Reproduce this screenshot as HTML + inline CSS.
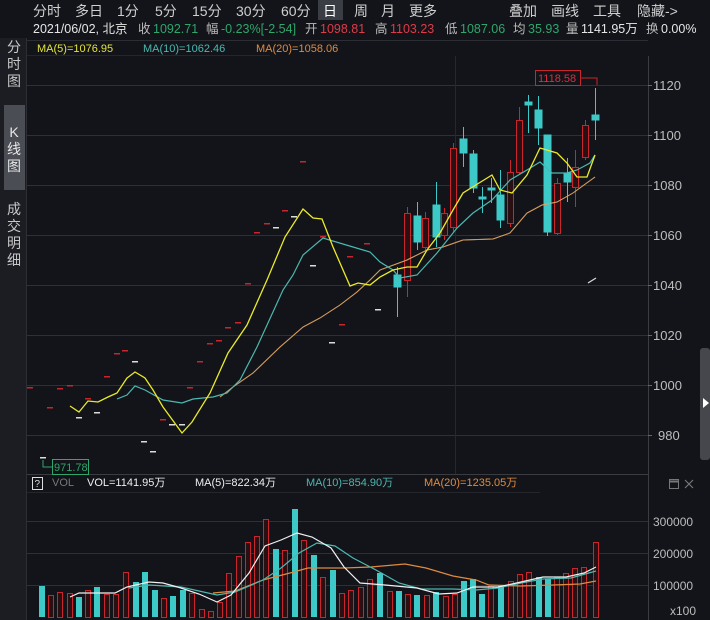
<!DOCTYPE html>
<html><head><meta charset="utf-8"><style>
html,body{margin:0;padding:0;background:#121419;}
svg{display:block;font-family:"Liberation Sans","Noto Sans CJK SC",sans-serif;}
</style></head><body>
<svg width="710" height="620" viewBox="0 0 710 620" xmlns="http://www.w3.org/2000/svg">
<rect width="710" height="620" fill="#121419"/>
<!-- sidebar -->
<rect x="0" y="38" width="26" height="582" fill="#1b1d23"/>
<rect x="4" y="105" width="21" height="85" fill="#4a4d54"/>
<line x1="26.5" y1="38" x2="26.5" y2="620" stroke="#2c2e34"/>
<g fill="#c8c8c8" font-size="14" text-anchor="middle">
<text x="14" y="52">分</text><text x="14" y="69">时</text><text x="14" y="86">图</text>
<text x="14" y="137" fill="#e8e8e8">K</text><text x="14" y="154" fill="#e8e8e8">线</text><text x="14" y="171" fill="#e8e8e8">图</text>
<text x="14" y="214">成</text><text x="14" y="231">交</text><text x="14" y="248">明</text><text x="14" y="265">细</text>
</g>
<!-- top bar -->
<rect x="318" y="0" width="25" height="20" fill="#3a3d44"/>
<g fill="#cfcfcf" font-size="14">
<text x="33" y="16">分时</text><text x="75" y="16">多日</text><text x="117" y="16">1分</text><text x="155" y="16">5分</text><text x="192" y="16">15分</text><text x="236" y="16">30分</text><text x="281" y="16">60分</text>
<text x="323" y="16" fill="#fff">日</text><text x="354" y="16">周</text><text x="381" y="16">月</text><text x="409" y="16">更多</text>
<text x="509" y="16">叠加</text><text x="551" y="16">画线</text><text x="593" y="16">工具</text><text x="637" y="16">隐藏-&gt;</text>
</g>
<g font-size="12.5">
<text x="33" y="33" fill="#e6e6e6">2021/06/02, 北京</text>
<text x="138" y="33" fill="#bbb">收</text><text x="153" y="33" fill="#2fa66a">1092.71</text>
<text x="206" y="33" fill="#bbb">幅</text><text x="221" y="33" fill="#2fa66a">-0.23%[-2.54]</text>
<text x="305" y="33" fill="#bbb">开</text><text x="320" y="33" fill="#e03a48">1098.81</text>
<text x="375" y="33" fill="#bbb">高</text><text x="390" y="33" fill="#e03a48">1103.23</text>
<text x="445" y="33" fill="#bbb">低</text><text x="460" y="33" fill="#2fa66a">1087.06</text>
<text x="513" y="33" fill="#bbb">均</text><text x="528" y="33" fill="#2fa66a">35.93</text>
<text x="566" y="33" fill="#bbb">量</text><text x="581" y="33" fill="#e6e6e6">1141.95万</text>
<text x="646" y="33" fill="#bbb">换</text><text x="661" y="33" fill="#e6e6e6">0.00%</text>
</g>
<!-- chart frame -->
<line x1="27" y1="40.5" x2="648" y2="40.5" stroke="#2c2e34"/>
<line x1="27" y1="55.5" x2="270" y2="55.5" stroke="#24262c"/>
<g font-size="11">
<text x="37" y="52" fill="#e4e43a">MA(5)=1076.95</text>
<text x="143" y="52" fill="#4cb8b0">MA(10)=1062.46</text>
<text x="256" y="52" fill="#e08a40">MA(20)=1058.06</text>
</g>
<g stroke="#2e3036" stroke-width="1">
<line x1="27" y1="85.5" x2="648" y2="85.5"/><line x1="27" y1="135.5" x2="648" y2="135.5"/>
<line x1="27" y1="185.5" x2="648" y2="185.5"/><line x1="27" y1="235.5" x2="648" y2="235.5"/>
<line x1="27" y1="285.5" x2="648" y2="285.5"/><line x1="27" y1="335.5" x2="648" y2="335.5"/>
<line x1="27" y1="385.5" x2="648" y2="385.5"/><line x1="27" y1="435.5" x2="648" y2="435.5"/>
<line x1="455.5" y1="56" x2="455.5" y2="474" stroke="#26282e"/>
<line x1="27" y1="474.5" x2="648" y2="474.5" stroke="#3a3c42"/>
<line x1="27" y1="521.5" x2="648" y2="521.5"/><line x1="27" y1="553.5" x2="648" y2="553.5"/><line x1="27" y1="585.5" x2="648" y2="585.5"/>
</g>
<line x1="648.5" y1="56" x2="648.5" y2="620" stroke="#3a3c42"/>
<g stroke="#666" stroke-width="1">
<line x1="648" y1="85.5" x2="652" y2="85.5"/><line x1="648" y1="135.5" x2="652" y2="135.5"/><line x1="648" y1="185.5" x2="652" y2="185.5"/><line x1="648" y1="235.5" x2="652" y2="235.5"/><line x1="648" y1="285.5" x2="652" y2="285.5"/><line x1="648" y1="335.5" x2="652" y2="335.5"/><line x1="648" y1="385.5" x2="652" y2="385.5"/><line x1="648" y1="435.5" x2="652" y2="435.5"/>
</g>
<g fill="#bdbdbd" font-size="13">
<text x="653" y="90">1120</text><text x="653" y="140">1100</text><text x="653" y="190">1080</text><text x="653" y="240">1060</text><text x="653" y="290">1040</text><text x="653" y="340">1020</text><text x="653" y="390">1000</text><text x="658" y="440">980</text>
</g>
<g fill="#bdbdbd" font-size="12">
<text x="653" y="526">300000</text><text x="653" y="558">200000</text><text x="653" y="590">100000</text><text x="670" y="615">x100</text>
</g>
<!-- scrollbar -->
<rect x="700" y="348" width="10" height="112" rx="3" fill="#45474d"/>
<polygon points="703,398 709,403 703,408" fill="#fff"/>
<!-- small-dash candles left -->
<g fill="#c8262c">
<rect x="27" y="387" width="6" height="1.5"/><rect x="47" y="407" width="6" height="1.5"/><rect x="57" y="388" width="6" height="1.5"/><rect x="67" y="385" width="6" height="1.5"/><rect x="85" y="398" width="6" height="1.5"/><rect x="104" y="376" width="6" height="1.5"/><rect x="114" y="353" width="6" height="1.5"/><rect x="122" y="350" width="6" height="1.5"/><rect x="160" y="419" width="6" height="1.5"/><rect x="187" y="387" width="6" height="1.5"/><rect x="197" y="361" width="6" height="1.5"/><rect x="207" y="343" width="6" height="1.5"/><rect x="216" y="340" width="6" height="1.5"/><rect x="225" y="327" width="6" height="1.5"/><rect x="235" y="322" width="6" height="1.5"/><rect x="245" y="283" width="6" height="1.5"/><rect x="254" y="232" width="6" height="1.5"/><rect x="264" y="223" width="6" height="1.5"/><rect x="282" y="210" width="6" height="1.5"/><rect x="300" y="161" width="6" height="1.5"/><rect x="320" y="236" width="6" height="1.5"/><rect x="339" y="324" width="6" height="1.5"/><rect x="347" y="256" width="6" height="1.5"/><rect x="364" y="243" width="6" height="1.5"/>
</g>
<g fill="#dcdcdc">
<rect x="40" y="457" width="6" height="1.5"/><rect x="76" y="417" width="6" height="1.5"/><rect x="94" y="412" width="6" height="1.5"/><rect x="132" y="361" width="6" height="1.5"/><rect x="141" y="441" width="6" height="1.5"/><rect x="150" y="451" width="6" height="1.5"/><rect x="169" y="424" width="6" height="1.5"/><rect x="179" y="424" width="6" height="1.5"/><rect x="273" y="227" width="6" height="1.5"/><rect x="291" y="216" width="6" height="1.5"/><rect x="310" y="265" width="6" height="1.5"/><rect x="329" y="342" width="6" height="1.5"/><rect x="375" y="309" width="6" height="1.5"/>
</g>
<!-- right candles -->
<g stroke="#3cc9c7" fill="#3cc9c7" stroke-width="1">
<line x1="397.5" y1="267" x2="397.5" y2="317"/><rect x="394" y="275" width="7" height="12"/>
<line x1="417.5" y1="202" x2="417.5" y2="250"/><rect x="414" y="216" width="7" height="26"/>
<line x1="436.5" y1="182" x2="436.5" y2="247"/><rect x="433" y="205" width="7" height="32"/>
<line x1="463.5" y1="127" x2="463.5" y2="167"/><rect x="460" y="139" width="7" height="14"/>
<line x1="473.5" y1="150" x2="473.5" y2="193"/><rect x="470" y="154" width="7" height="34"/>
<line x1="482.5" y1="187" x2="482.5" y2="213"/><rect x="479" y="197" width="7" height="2"/>
<line x1="491.5" y1="178" x2="491.5" y2="203"/><rect x="488" y="188" width="7" height="2"/>
<line x1="500.5" y1="170" x2="500.5" y2="228"/><rect x="497" y="195" width="7" height="25"/>
<line x1="528.5" y1="95" x2="528.5" y2="133"/><rect x="525" y="102" width="7" height="3"/>
<line x1="538.5" y1="96" x2="538.5" y2="145"/><rect x="535" y="110" width="7" height="18"/>
<line x1="547.5" y1="135" x2="547.5" y2="236"/><rect x="544" y="135" width="7" height="97"/>
<line x1="567.5" y1="158" x2="567.5" y2="202"/><rect x="564" y="173" width="7" height="9"/>
<line x1="595.5" y1="88" x2="595.5" y2="140"/><rect x="592" y="115" width="7" height="5"/>
</g>
<g stroke="#c8262c" fill="#2a0f13" stroke-width="1">
<line x1="407.5" y1="207" x2="407.5" y2="297"/><rect x="404.5" y="213.5" width="6" height="67"/>
<line x1="425.5" y1="212" x2="425.5" y2="250"/><rect x="422.5" y="218.5" width="6" height="29"/>
<line x1="444.5" y1="208" x2="444.5" y2="240"/><rect x="441.5" y="213.5" width="6" height="22"/>
<line x1="453.5" y1="143" x2="453.5" y2="232"/><rect x="450.5" y="148.5" width="6" height="79"/>
<line x1="510.5" y1="160" x2="510.5" y2="227"/><rect x="507.5" y="172.5" width="6" height="51"/>
<line x1="519.5" y1="107" x2="519.5" y2="175"/><rect x="516.5" y="120.5" width="6" height="52"/>
<line x1="557.5" y1="178" x2="557.5" y2="235"/><rect x="554.5" y="183.5" width="6" height="50"/>
<line x1="575.5" y1="150" x2="575.5" y2="207"/><rect x="572.5" y="167.5" width="6" height="20"/>
<line x1="585.5" y1="120" x2="585.5" y2="160"/><rect x="582.5" y="125.5" width="6" height="32"/>
</g>
<!-- MA lines -->
<polyline fill="none" stroke="#e0d8a8" stroke-width="1" opacity="0.85" points="220,397 233,387 253,373 280,347 303,327 320,318 340,305 357,292 370,280 380,270 407,260 427,250 443,247 463,240 493,239 510,233 527,213 542,205 557,202 573,193 595,177"/>
<polyline fill="none" stroke="#e08a40" stroke-width="1" opacity="0.7" points="220,397 233,387 253,373 280,347 303,327 320,318 340,305 357,292 370,280 380,270 407,260 427,250 443,247 463,240 493,239 510,233 527,213 542,205 557,202 573,193 595,177"/>
<polyline fill="none" stroke="#4cb8b0" stroke-width="1.2" points="117,399 127,395 135,386 145,390 163,400 182,403 193,399 213,397 227,393 240,380 257,347 283,290 293,275 303,255 323,238 353,247 370,252 380,262 393,270 400,278 417,275 437,253 457,228 473,213 492,200 510,180 527,170 540,162 552,173 567,173 577,170 590,163 595,155"/>
<polyline fill="none" stroke="#eaea2a" stroke-width="1.3" points="70,406 79,412 88,401 98,402 108,397 117,393 127,378 135,372 145,378 153,390 163,407 182,433 192,422 210,393 228,353 247,325 267,280 285,237 303,209 313,218 322,219 333,247 350,286 358,283 370,285 380,277 393,270 407,267 417,267 427,250 440,233 453,210 463,193 492,175 500,190 512,193 527,175 540,148 557,153 567,163 577,177 587,177 595,155"/>
<line x1="588" y1="283" x2="596" y2="278" stroke="#ddd" stroke-width="1.2"/>
<!-- max/min labels -->
<rect x="535.5" y="70.5" width="45" height="15" fill="none" stroke="#c8262c"/>
<text x="538" y="82" font-size="11" fill="#d83040">1118.58</text>
<polyline points="581,78 597,78 597,85" fill="none" stroke="#c8262c"/>
<polyline points="43,460 43,467 52,467" fill="none" stroke="#2fa66a"/>
<rect x="52.5" y="459.5" width="36" height="15" fill="none" stroke="#2fa66a"/>
<text x="54" y="471" font-size="11" fill="#2fa66a">971.78</text>
<!-- volume header -->
<rect x="32.5" y="477.5" width="10" height="12" fill="none" stroke="#ddd"/>
<text x="34.5" y="487" font-size="10" fill="#ddd">?</text>
<g font-size="11">
<text x="52" y="486" fill="#777">VOL</text>
<text x="87" y="486" fill="#eee">VOL=1141.95万</text>
<text x="195" y="486" fill="#eee">MA(5)=822.34万</text>
<text x="306" y="486" fill="#4cb8b0">MA(10)=854.90万</text>
<text x="424" y="486" fill="#e08a40">MA(20)=1235.05万</text>
</g>
<line x1="27" y1="492.5" x2="540" y2="492.5" stroke="#24262c"/>
<rect x="669.5" y="479.5" width="9" height="9" fill="none" stroke="#777"/><line x1="669" y1="481.5" x2="679" y2="481.5" stroke="#777" stroke-width="2"/>
<path d="M685 480 L693 488 M693 480 L685 488" stroke="#777" stroke-width="1.2"/>
<!-- volume bars -->
<g fill="#3cc9c7">
<rect x="39" y="586" width="6" height="31"/><rect x="76" y="597" width="6" height="20"/><rect x="94" y="587" width="6" height="30"/><rect x="133" y="582" width="6" height="35"/><rect x="142" y="572" width="6" height="45"/><rect x="152" y="590" width="6" height="27"/><rect x="170" y="596" width="6" height="21"/><rect x="180" y="590" width="6" height="27"/><rect x="273" y="549" width="6" height="68"/><rect x="292" y="509" width="6" height="108"/><rect x="311" y="555" width="6" height="62"/><rect x="330" y="570" width="6" height="47"/><rect x="377" y="573" width="6" height="44"/><rect x="396" y="591" width="6" height="26"/><rect x="414" y="595" width="6" height="22"/><rect x="433" y="592" width="6" height="25"/><rect x="461" y="581" width="6" height="36"/><rect x="470" y="579" width="6" height="38"/><rect x="479" y="594" width="6" height="23"/><rect x="498" y="586" width="6" height="31"/><rect x="536" y="577" width="6" height="40"/><rect x="545" y="579" width="6" height="38"/>
</g>
<g fill="#2a0f13" stroke="#c8262c">
<rect x="48.5" y="595.5" width="5" height="22"/><rect x="57.5" y="592.5" width="5" height="25"/><rect x="67.5" y="593.5" width="5" height="24"/><rect x="85.5" y="590.5" width="5" height="27"/><rect x="104.5" y="594.5" width="5" height="23"/><rect x="113.5" y="594.5" width="5" height="23"/><rect x="123.5" y="572.5" width="5" height="45"/><rect x="161.5" y="598.5" width="5" height="19"/><rect x="189.5" y="593.5" width="5" height="24"/><rect x="199.5" y="609.5" width="5" height="8"/><rect x="208.5" y="611.5" width="5" height="6"/><rect x="217.5" y="602.5" width="5" height="15"/><rect x="226.5" y="573.5" width="5" height="44"/><rect x="236.5" y="556.5" width="5" height="61"/><rect x="245.5" y="542.5" width="5" height="75"/><rect x="254.5" y="536.5" width="5" height="81"/><rect x="263.5" y="519.5" width="5" height="98"/><rect x="282.5" y="550.5" width="5" height="67"/><rect x="301.5" y="540.5" width="5" height="77"/><rect x="320.5" y="577.5" width="5" height="40"/><rect x="339.5" y="593.5" width="5" height="24"/><rect x="348.5" y="590.5" width="5" height="27"/><rect x="358.5" y="587.5" width="5" height="30"/><rect x="367.5" y="579.5" width="5" height="38"/><rect x="387.5" y="591.5" width="5" height="26"/><rect x="405.5" y="594.5" width="5" height="23"/><rect x="424.5" y="595.5" width="5" height="22"/><rect x="443.5" y="596.5" width="5" height="21"/><rect x="452.5" y="594.5" width="5" height="23"/><rect x="488.5" y="586.5" width="5" height="31"/><rect x="508.5" y="581.5" width="5" height="36"/><rect x="517.5" y="574.5" width="5" height="43"/><rect x="526.5" y="572.5" width="5" height="45"/><rect x="554.5" y="577.5" width="5" height="40"/><rect x="563.5" y="573.5" width="5" height="44"/><rect x="572.5" y="568.5" width="5" height="49"/><rect x="581.5" y="567.5" width="5" height="50"/><rect x="593.5" y="542.5" width="5" height="75"/>
</g>
<polyline fill="none" stroke="#e08a40" stroke-width="1.2" points="213,593 235,591 263,580 290,573 308,568 344,568 371,567 405,564 426,568 453,576 476,580 489,585 521,586 553,585 580,584 596,581"/>
<polyline fill="none" stroke="#4cb8b0" stroke-width="1.2" points="129,588 149,585 181,587 217,595 235,592 263,580 281,568 299,553 317,543 335,546 353,558 376,570 399,583 421,589 453,589 476,590 498,588 521,583 543,579 571,578 596,571"/>
<polyline fill="none" stroke="#f0f0f0" stroke-width="1.2" points="70,597 79,593 91,593 115,593 127,587 149,582 163,583 181,588 199,594 217,602 231,595 249,573 265,546 281,540 297,533 312,537 331,548 344,567 360,583 385,585 417,588 439,594 457,593 473,587 498,587 521,582 543,577 566,577 584,573 596,567"/>
</svg>
</body></html>
